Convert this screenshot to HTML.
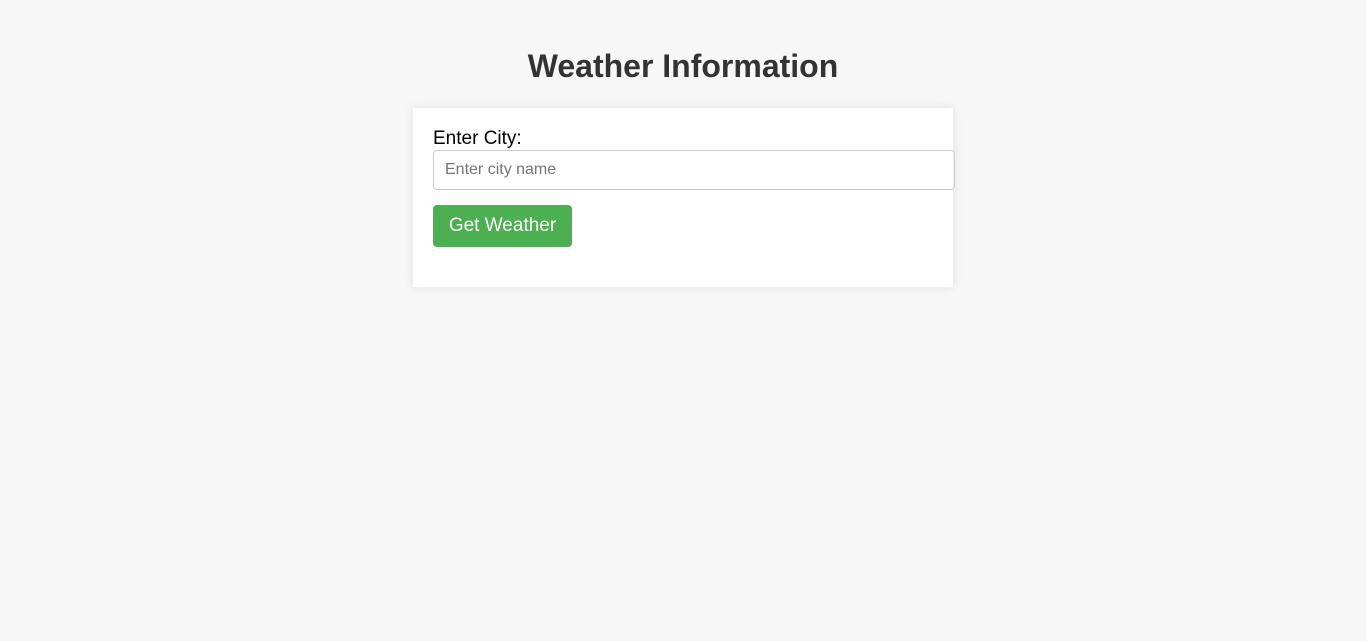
<!DOCTYPE html>
<html><head><style>
body{margin:0;background:#f7f7f7;font-family:"Liberation Sans",Arial,sans-serif;}
h1{margin:0;position:absolute;top:46px;left:0;width:1366px;text-align:center;font-size:32px;color:#333;font-weight:bold;line-height:40px;}
.card{position:absolute;left:413px;top:108px;width:540px;height:179px;background:#fff;box-shadow:0 0 10px rgba(0,0,0,0.1);}
label{position:absolute;left:20px;top:20px;font-size:19px;color:#000;line-height:21px;}
.inp{position:absolute;left:20px;top:42px;width:520px;height:38px;border:1px solid #ccc;border-radius:4px;box-sizing:content-box;}
.inp span{position:absolute;left:11px;top:10px;font-size:16px;color:#757575;}
.btn{position:absolute;left:20px;top:97px;width:139px;height:42px;background:#4caf50;border-radius:4px;color:#fff;font-size:19px;text-align:center;line-height:41px;}
</style></head><body>
<h1>Weather Information</h1>
<div class="card">
<label>Enter City:</label>
<div class="inp"><span>Enter city name</span></div>
<div class="btn">Get Weather</div>
</div>
</body></html>
